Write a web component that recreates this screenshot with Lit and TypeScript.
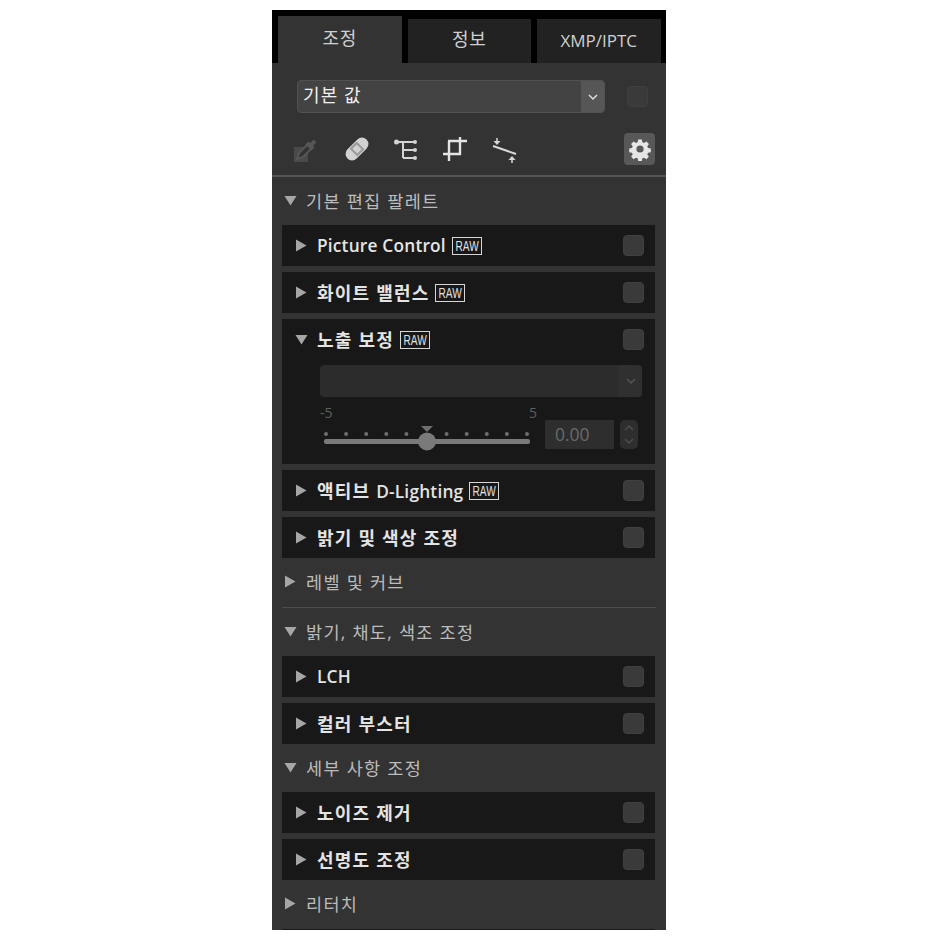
import { LitElement, html, css, svg } from 'lit';
import { customElement } from 'lit/decorators.js';

const DOWN = html`<svg class="tri" width="13" height="11" viewBox="0 0 13 11"><path d="M0.5 1 L12.5 1 L6.5 10.5 Z" fill="#a6a6a6"/></svg>`;
const RIGHT = html`<svg class="tri" width="13" height="13" viewBox="0 0 13 13"><path d="M1 0.5 L11.5 6.5 L1 12.5 Z" fill="#a6a6a6"/></svg>`;
const RAW = html`<span class="raw"><span>RAW</span></span>`;
const TICKS = [0, 1, 2, 3, 4, 6, 7, 8, 9, 10];

@customElement('app-root')
export class AppRoot extends LitElement {

  static styles = css`
    :host{
      display: block;
      background: #fff;
      height: 940px;
      padding-top: 10px;
      box-sizing: border-box;
      font-family: "Open Sans", "Noto Sans CJK KR", sans-serif;
    }
    .panel{
      width: 394px;
      height: 920px;
      margin-left: 272px;
      background: #333;
      overflow: hidden;
      color: #e8e8e8;
    }

    .tabs{
      display: flex;
      align-items: flex-end;
      gap: 6px;
      height: 53px;
      padding: 0 6px;
      background: #000;
    }
    .tab{
      flex: 0 0 123.5px;
      height: 44px;
      display: flex;
      justify-content: center;
      align-items: center;
      padding-bottom: 6px;
      box-sizing: border-box;
      background: #222;
      color: #d0d0d0;
      font-size: 18px;
      letter-spacing: 0.6px;
    }
    .tab.latin{
      font-size: 17px;
      letter-spacing: 0;
      padding-bottom: 2px;
    }
    .tab.active{
      height: 47px;
      background: #333;
      padding-bottom: 6px;
    }

    .preset{
      display: flex;
      align-items: center;
      height: 33px;
      margin-top: 17px;
      padding-left: 25px;
    }
    .preset-box{
      width: 308px;
      height: 33px;
      display: flex;
      box-sizing: border-box;
      border-radius: 4px;
      border: 1px solid #525252;
      background: #434343;
      overflow: hidden;
    }
    .preset-label{
      flex: 1;
      padding-left: 5px;
      font-size: 18px;
      letter-spacing: 1.1px;
      line-height: 29px;
      color: #f0f0f0;
    }
    .preset-arrow{
      width: 23px;
      display: flex;
      align-items: center;
      justify-content: center;
      background: #565656;
    }
    .check{
      flex: none;
      width: 21px;
      height: 21px;
      box-sizing: border-box;
      border-radius: 4px;
      background: #3a3a3a;
      border: 1px solid #404040;
    }
    .preset .check{
      margin-left: 22px;
    }

    .tools{
      display: flex;
      align-items: center;
      height: 32px;
      margin-top: 20px;
      padding: 0 11px 0 20px;
    }
    .tools svg{
      display: block;
      flex: none;
    }
    .gear{
      margin-left: auto;
      width: 31px;
      height: 32px;
      display: flex;
      align-items: center;
      justify-content: center;
      background: #585858;
      border-radius: 4px;
    }
    .rule{
      height: 2px;
      margin-top: 10px;
      background: #555;
    }

    .head{
      display: flex;
      align-items: center;
      box-sizing: border-box;
      height: 48px;
      padding: 0 0 2px 12px;
      gap: 9px;
      color: #bcbcbc;
      font-size: 17.5px;
      letter-spacing: 1.3px;
    }
    .head.ruled{
      height: 50px;
      border-bottom: 1px solid #4c4c4c;
      margin: 0 10px;
      padding-left: 2px;
    }
    .head.last{
      height: 49px;
    }

    .rows{
      display: flex;
      flex-direction: column;
      gap: 6px;
      margin: 0 11px 0 10px;
    }
    .row{
      background: #181818;
    }
    .row-head{
      display: flex;
      align-items: center;
      height: 41px;
      padding: 0 11px 0 13px;
      gap: 9px;
      font-size: 18px;
      letter-spacing: 1.2px;
      font-weight: 700;
      color: #e4e4e4;
    }
    .row-head .label{
      position: relative;
      top: -1px;
    }
    .lat{
      font-size: 17.3px;
      letter-spacing: 0.2px;
      font-weight: 600;
    }
    .row-head .check{
      margin-left: auto;
    }
    .tri{
      flex: none;
    }
    .raw{
      display: flex;
      justify-content: center;
      flex: none;
      box-sizing: border-box;
      width: 30px;
      height: 18px;
      margin-left: -3px;
      border: 1px solid #d6d6d6;
      font-family: "Liberation Sans", sans-serif;
      font-size: 14px;
      font-weight: 400;
      line-height: 16px;
      letter-spacing: 0;
      color: #e2e2e2;
    }
    .raw span{
      display: block;
      transform: scaleX(.72);
    }

    .exposure{
      height: 104px;
      box-sizing: border-box;
      padding: 5px 13px 0 38px;
    }
    .dis-select{
      height: 32px;
      display: flex;
      justify-content: flex-end;
      border-radius: 4px;
      background: #2c2c2c;
    }
    .dis-arrow{
      width: 23px;
      display: flex;
      align-items: center;
      justify-content: center;
      background: #303030;
      border-radius: 0 4px 4px 0;
    }
    .slider-row{
      display: flex;
      align-items: flex-start;
      margin-top: 7px;
    }
    .slider{
      width: 220px;
      flex: none;
    }
    .limits{
      display: flex;
      justify-content: space-between;
      width: 217px;
      font-size: 14px;
      line-height: 18px;
      color: #5e5e5e;
    }
    .value{
      flex: none;
      width: 69px;
      height: 29px;
      box-sizing: border-box;
      padding-left: 10px;
      margin: 16px 0 0 5px;
      background: #2e2e2e;
      color: #6a6a6a;
      font-size: 17.5px;
      line-height: 29px;
    }
    .spin{
      flex: none;
      width: 18px;
      height: 29px;
      margin: 16px 0 0 6px;
      border-radius: 5px;
      background: #2e2e2e;
    }
    .spin svg, .track{
      display: block;
    }
    .track{
      margin-top: 4px;
    }
    .strip{
      height: 1px;
      margin: 0 11px 0 10px;
      background: #181818;
    }
  `

  checkbox(){
    return html`<span class="check"></span>`;
  }

  row(label: unknown, raw = false){
    return html`
      <div class="row">
        <div class="row-head">
          ${RIGHT}<span class="label">${label}</span>${raw ? RAW : ""}
          ${this.checkbox()}
        </div>
      </div>
    `;
  }

  renderTools(){
    return html`
      <div class="tools">
        <svg width="26" height="26" viewBox="0 0 26 26" style="margin-top:3px" fill="none" stroke="#565656">
          <rect x="2" y="9" width="14" height="15" fill="#4a4a4a" stroke="none"/>
          <path d="M5 21 L7 15 L16 6 L20 10 L11 19 Z" fill="#333" stroke-width="2"/>
          <path d="M15 5 L21 11 M18 8 L23 3" stroke-width="4"/>
        </svg>
        <svg width="28" height="28" viewBox="0 0 28 28" style="margin-left:25px">
          <g transform="rotate(-45 14 14)">
            <rect x="0.5" y="7.5" width="27" height="13" rx="6.5" fill="#d2d2d2"/>
            <rect x="9" y="8.5" width="10" height="11" fill="#9a9a9a"/>
            <rect x="11" y="10.5" width="6" height="7" fill="#d2d2d2"/>
          </g>
        </svg>
        <svg width="26" height="26" viewBox="0 0 26 26" style="margin-left:22px" fill="#d4d4d4" stroke="#d4d4d4" stroke-width="2">
          <path d="M3 6 H22 M10 6 V22 M10 14 H22 M10 22 H22" fill="none"/>
          <circle cx="3.5" cy="6" r="2.5" stroke="none"/>
          <circle cx="22" cy="6" r="2" stroke="none"/>
          <circle cx="22" cy="14" r="2" stroke="none"/>
          <circle cx="22" cy="22" r="2" stroke="none"/>
        </svg>
        <svg width="26" height="26" viewBox="0 0 26 26" style="margin-left:24px" fill="none" stroke="#e4e4e4" stroke-width="2.4">
          <path d="M6 5 V25 M5 5 H24 M17 1 V19 M0 18 H18"/>
        </svg>
        <svg width="28" height="28" viewBox="0 0 28 28" style="margin-left:23px" fill="#d8d8d8" stroke="#d8d8d8" stroke-width="1.5">
          <path d="M1 11 L24 19" fill="none" stroke-width="2"/>
          <path d="M5 3 V7" fill="none"/><path d="M1.5 6 H8.5 L5 10 Z" stroke="none"/>
          <path d="M20 24 V28" fill="none"/><path d="M16.5 25 H23.5 L20 21 Z" stroke="none"/>
        </svg>
        <div class="gear">
          <svg width="24" height="24" viewBox="0 0 24 24">
            <path fill-rule="evenodd" fill="#e6e6e6" d="M10 1.5h4l.6 3.1 1.9.8 2.6-1.8 2.8 2.8-1.8 2.6.8 1.9 3.1.6v4l-3.1.6-.8 1.9 1.8 2.6-2.8 2.8-2.6-1.8-1.9.8-.6 3.1h-4l-.6-3.1-1.9-.8-2.6 1.8-2.8-2.8 1.8-2.6-.8-1.9-3.1-.6v-4l3.1-.6.8-1.9-1.8-2.6 2.8-2.8 2.6 1.8 1.9-.8zM12 8a4 4 0 1 0 0 8 4 4 0 0 0 0-8z" transform="translate(1.2 1.2) scale(.9)"/>
          </svg>
        </div>
      </div>
    `;
  }

  renderExposure(){
    return html`
      <div class="row">
        <div class="row-head">
          ${DOWN}<span class="label">노출 보정</span>${RAW}
          ${this.checkbox()}
        </div>
        <div class="exposure">
          <div class="dis-select">
            <div class="dis-arrow">
              <svg width="12" height="8" viewBox="0 0 12 8"><path d="M2 2 L6 6 L10 2" fill="none" stroke="#555" stroke-width="1.5"/></svg>
            </div>
          </div>
          <div class="slider-row">
            <div class="slider">
              <div class="limits"><span>-5</span><span>5</span></div>
              <svg class="track" width="220" height="32" viewBox="0 0 220 32">
                ${TICKS.map((i) => svg`<circle cx="${6 + i * 20.1}" cy="8" r="2" fill="#6e6e6e"/>`)}
                <path d="M101 0 H113 L107 6 Z" fill="#6e6e6e"/>
                <rect x="4" y="13" width="206" height="5" rx="2" fill="#7a7a7a"/>
                <circle cx="107" cy="15.5" r="9" fill="#7a7a7a"/>
              </svg>
            </div>
            <div class="value">0.00</div>
            <div class="spin">
              <svg width="18" height="29" viewBox="0 0 18 29" fill="none" stroke="#4c4c4c" stroke-width="1.5">
                <path d="M5 10 L9 6 L13 10 M5 19 L9 23 L13 19"/>
              </svg>
            </div>
          </div>
        </div>
      </div>
    `;
  }

  render(){
    return html`
      <div class="panel">
        <div class="tabs">
          <div class="tab active">조정</div>
          <div class="tab">정보</div>
          <div class="tab latin">XMP/IPTC</div>
        </div>

        <div class="preset">
          <div class="preset-box">
            <span class="preset-label">기본 값</span>
            <span class="preset-arrow">
              <svg width="12" height="8" viewBox="0 0 12 8"><path d="M2 2 L6 6 L10 2" fill="none" stroke="#ddd" stroke-width="1.5"/></svg>
            </span>
          </div>
          ${this.checkbox()}
        </div>

        ${this.renderTools()}
        <div class="rule"></div>

        <div class="head">${DOWN}<span>기본 편집 팔레트</span></div>
        <div class="rows">
          ${this.row(html`<span class="lat">Picture Control</span>`, true)}
          ${this.row("화이트 밸런스", true)}
          ${this.renderExposure()}
          ${this.row(html`액티브 <span class="lat">D-Lighting</span>`, true)}
          ${this.row("밝기 및 색상 조정")}
        </div>

        <div class="head ruled">${RIGHT}<span>레벨 및 커브</span></div>
        <div class="head">${DOWN}<span>밝기, 채도, 색조 조정</span></div>
        <div class="rows">
          ${this.row(html`<span class="lat">LCH</span>`)}
          ${this.row("컬러 부스터")}
        </div>

        <div class="head">${DOWN}<span>세부 사항 조정</span></div>
        <div class="rows">
          ${this.row("노이즈 제거")}
          ${this.row("선명도 조정")}
        </div>

        <div class="head last">${RIGHT}<span>리터치</span></div>
        <div class="strip"></div>
      </div>
    `;
  }
}
